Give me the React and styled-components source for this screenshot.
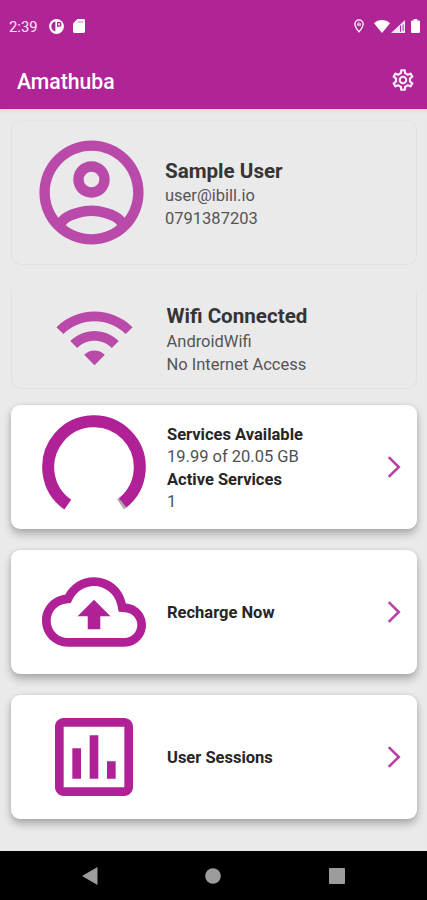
import React from "react";
import styled, { createGlobalStyle } from "styled-components";

const App = () => {
    return (
        <>
            <GlobalStyle />
            <Screen>
                <StatusBar>
                    <Clock>2:39</Clock>
                    <svg width="15" height="15" viewBox="0 0 15 15">
                        <circle cx="7.5" cy="7.5" r="7.4" fill="#fff" />
                        <path d="M6.4 2.6A5 5 0 0 0 6.4 12.4Z" fill="#b02596" />
                        <path d="M8 3h2.8a1.6 1.6 0 0 1 1.6 1.7v1.6a1.6 1.6 0 0 1-1.6 1.5H8z" fill="#b02596" />
                        <path d="M9.2 4.2h1.6v2.2H9.2z" fill="#fff" />
                    </svg>
                    <SdCard width="12" height="14" viewBox="0 0 12 14">
                        <path d="M4.4 0H10.6A1.4 1.4 0 0 1 12 1.4V12.6A1.4 1.4 0 0 1 10.6 14H1.4A1.4 1.4 0 0 1 0 12.6V4.4Z" fill="#fff" />
                        <path d="M5 2.4h5.2v1.2H5z" fill="#d88bcb" />
                    </SdCard>
                    <StatusRight>
                        <svg width="10" height="14" viewBox="0 0 10 14">
                            <path d="M5 .9A4.1 4.1 0 0 0 .9 5C.9 8 5 12.8 5 12.8S9.1 8 9.1 5A4.1 4.1 0 0 0 5 .9Z" fill="none" stroke="#fff" strokeWidth="1.3" />
                            <path d="M5 2.9v3.2M3.6 4.3v2h2.8v-2" fill="none" stroke="#fff" strokeWidth=".9" />
                        </svg>
                        <Wifi width="16" height="13" viewBox="0 0 16 13">
                            <path d="M8 13 0 3.2C4.5-1 11.5-1 16 3.2Z" fill="#fff" />
                        </Wifi>
                        <Signal width="14" height="13" viewBox="0 0 14 13">
                            <path d="M14 0V13H0Z" fill="#fbe6f7" />
                            <path d="M9 5.4h1v6.4H9zM11.6 4.5h1v6.5h-1z" fill="#b02596" />
                        </Signal>
                        <Battery width="9" height="14" viewBox="0 0 9 14">
                            <path d="M2.7 0h3.6v1.4h1.5Q9 1.4 9 2.6V12.8Q9 14 7.8 14H1.2Q0 14 0 12.8V2.6Q0 1.4 1.2 1.4h1.5Z" fill="#fff" />
                        </Battery>
                    </StatusRight>
                </StatusBar>
                <AppBar>
                    <AppTitle>Amathuba</AppTitle>
                    <svg width="26" height="26" viewBox="0 0 24 24" fill="#fdeafa">
                        <path d={icons.settings} />
                    </svg>
                </AppBar>

                <Content>
                    <FlatCard $height={145} $gap={25}>
                        <IconSlot $inset={6.5} $bottom={1} $faded>
                            <svg width="125" height="125" viewBox="0 0 24 24"><path d={icons.account} /></svg>
                        </IconSlot>
                        <FlatText $top={3}>
                            <Name>Sample User</Name>
                            <Detail>user@ibill.io</Detail>
                            <Detail>0791387203</Detail>
                        </FlatText>
                    </FlatCard>
                    <FlatCard $height={99} $gap={16} $open>
                        <IconSlot $inset={12.5} $bottom={5} $faded>
                            <svg width="83" height="83" viewBox="0 0 24 24"><path d={icons.wifi} /></svg>
                        </IconSlot>
                        <FlatText $left={1.5}>
                            <Name $bottom={1}>Wifi Connected</Name>
                            <Detail>AndroidWifi</Detail>
                            <Detail>No Internet Access</Detail>
                        </FlatText>
                    </FlatCard>

                    <Card>
                        <IconSlot>
                            <svg width="104" height="104" viewBox="0 0 104 104" fill="none" strokeWidth="12">
                                <path d="M78.5 89.3 81.6 87.2" stroke="#aaa" />
                                <path d="M25.8 89.7A45.8 45.8 0 1 1 80.7 87.8" />
                            </svg>
                        </IconSlot>
                        <CardText>
                            <Label>Services Available</Label>
                            <Value>19.99 of 20.05 GB</Value>
                            <Label>Active Services</Label>
                            <Value>1</Value>
                        </CardText>
                        <Chevron />
                    </Card>
                    <Card>
                        <IconSlot>
                            <svg width="104" height="104" viewBox="0 0 24 24"><path d={icons.cloud} /></svg>
                        </IconSlot>
                        <CardText>
                            <Label>Recharge Now</Label>
                        </CardText>
                        <Chevron />
                    </Card>
                    <Card>
                        <IconSlot>
                            <svg width="104" height="104" viewBox="0 0 24 24"><path d={icons.chart} /></svg>
                        </IconSlot>
                        <CardText>
                            <Label>User Sessions</Label>
                        </CardText>
                        <Chevron />
                    </Card>
                </Content>

                <NavBar>
                    <svg width="16" height="18" viewBox="0 0 16 18"><path d="M0 9 15.5 0V18Z" /></svg>
                    <svg width="16" height="16" viewBox="0 0 16 16"><circle cx="8" cy="8" r="7.8" /></svg>
                    <svg width="16" height="16" viewBox="0 0 16 16"><rect width="16" height="16" rx="1" /></svg>
                </NavBar>
            </Screen>
        </>
    );
};

const Chevron = () => (
    <ChevronIcon width="15" height="22" viewBox="0 0 15 22">
        <path d="M1.7 1.2 11.8 11 1.7 20.8" fill="none" stroke="#b83ea6" strokeWidth="2.5" />
    </ChevronIcon>
);

const icons = {
    settings: "M19.43 12.98c.04-.32.07-.64.07-.98 0-.34-.03-.66-.07-.98l2.11-1.65c.19-.15.24-.42.12-.64l-2-3.46c-.09-.16-.26-.25-.44-.25-.06 0-.12.01-.17.03l-2.49 1c-.52-.4-1.08-.73-1.69-.98l-.38-2.65C14.46 2.18 14.25 2 14 2h-4c-.25 0-.46.18-.49.42l-.38 2.65c-.61.25-1.17.59-1.69.98l-2.49-1c-.06-.02-.12-.03-.18-.03-.17 0-.34.09-.43.25l-2 3.46c-.13.22-.07.49.12.64l2.11 1.65c-.04.32-.07.65-.07.98 0 .33.03.66.07.98l-2.11 1.65c-.19.15-.24.42-.12.64l2 3.46c.09.16.26.25.44.25.06 0 .12-.01.17-.03l2.49-1c.52.4 1.08.73 1.69.98l.38 2.65c.03.24.24.42.49.42h4c.25 0 .46-.18.49-.42l.38-2.65c.61-.25 1.17-.59 1.69-.98l2.49 1c.06.02.12.03.18.03.17 0 .34-.09.43-.25l2-3.46c.12-.22.07-.49-.12-.64l-2.11-1.65zm-1.98-1.71c.04.31.05.52.05.73 0 .21-.02.43-.05.73l-.14 1.13.89.7 1.08.84-.7 1.21-1.27-.51-1.04-.42-.9.68c-.43.32-.84.56-1.25.73l-1.06.43-.16 1.13-.2 1.35h-1.4l-.19-1.35-.16-1.13-1.06-.43c-.43-.18-.83-.41-1.23-.71l-.91-.7-1.06.43-1.27.51-.7-1.21 1.08-.84.89-.7-.14-1.13c-.03-.31-.05-.54-.05-.74s.02-.43.05-.73l.14-1.13-.89-.7-1.08-.84.7-1.21 1.27.51 1.04.42.9-.68c.43-.32.84-.56 1.25-.73l1.06-.43.16-1.13.2-1.35h1.39l.19 1.35.16 1.13 1.06.43c.43.18.83.41 1.23.71l.91.7 1.06-.43 1.27-.51.7 1.21-1.07.85-.89.7.14 1.13zM12 8c-2.21 0-4 1.79-4 4s1.79 4 4 4 4-1.79 4-4-1.79-4-4-4zm0 6c-1.1 0-2-.9-2-2s.9-2 2-2 2 .9 2 2-.9 2-2 2z",
    account: "M12,2A10,10 0 0,0 2,12A10,10 0 0,0 12,22A10,10 0 0,0 22,12A10,10 0 0,0 12,2M7.07,18.28C7.5,17.38 10.12,16.5 12,16.5C13.88,16.5 16.5,17.38 16.93,18.28C15.57,19.36 13.86,20 12,20C10.14,20 8.43,19.36 7.07,18.28M18.36,16.83C16.93,15.09 13.46,14.5 12,14.5C10.54,14.5 7.07,15.09 5.64,16.83C4.62,15.5 4,13.82 4,12C4,7.59 7.59,4 12,4C16.41,4 20,7.59 20,12C20,13.82 19.38,15.5 18.36,16.83M12,6C10.06,6 8.5,7.56 8.5,9.5C8.5,11.44 10.06,13 12,13C13.94,13 15.5,11.44 15.5,9.5C15.5,7.56 13.94,6 12,6M12,11A1.5,1.5 0 0,1 10.5,9.5A1.5,1.5 0 0,1 12,8A1.5,1.5 0 0,1 13.5,9.5A1.5,1.5 0 0,1 12,11Z",
    wifi: "M1 9l2 2c4.97-4.97 13.03-4.97 18 0l2-2C16.93 2.93 7.08 2.93 1 9zm8 8l3 3 3-3c-1.65-1.66-4.34-1.66-6 0zm-4-4l2 2c2.76-2.76 7.24-2.76 10 0l2-2C15.14 9.14 8.87 9.14 5 13z",
    cloud: "M19.35 10.04C18.67 6.59 15.64 4 12 4 9.11 4 6.6 5.64 5.35 8.04 2.34 8.36 0 10.91 0 14c0 3.31 2.69 6 6 6h13c2.76 0 5-2.24 5-5 0-2.64-2.05-4.78-4.65-4.96zM19 18H6c-2.21 0-4-1.79-4-4 0-2.05 1.53-3.76 3.56-3.97l1.07-.11.5-.95C8.08 7.14 9.94 6 12 6c2.62 0 4.88 1.86 5.39 4.43l.3 1.5 1.53.11c1.56.1 2.78 1.41 2.78 2.96 0 1.65-1.35 3-3 3zM8.2 13h2.35v3h2.9v-3h2.35l-3.8-3.8z",
    chart: "M19 3H5c-1.1 0-2 .9-2 2v14c0 1.1.9 2 2 2h14c1.1 0 2-.9 2-2V5c0-1.1-.9-2-2-2zm0 16H5V5h14v14zM7 10h2v7H7zm4-3h2v10h-2zm4 6h2v4h-2z",
};

const GlobalStyle = createGlobalStyle`
  body {
    margin: 0;
    background: #eaeaea;
    font-family: Roboto, sans-serif;
  }
  * {
    box-sizing: border-box;
  }
  svg {
    display: block;
    flex-shrink: 0;
  }
`;

const Screen = styled.div`
  width: 427px;
  height: 900px;
  display: flex;
  flex-direction: column;
  overflow: hidden;
  background: #eaeaea;
`;

const StatusBar = styled.div`
  height: 52px;
  display: flex;
  align-items: center;
  padding: 0 7px 0 9px;
  background: #b02596;
`;

const Clock = styled.span`
  width: 39.5px;
  padding-top: 1px;
  font-size: 14.8px;
  color: #fbe3f7;
`;

const SdCard = styled.svg`
  margin-left: 9.5px;
`;

const StatusRight = styled.div`
  display: flex;
  align-items: center;
  margin-left: auto;
`;

const Wifi = styled.svg`
  margin-left: 10px;
`;

const Signal = styled.svg`
  margin-left: 1px;
`;

const Battery = styled.svg`
  margin-left: 6px;
`;

const AppBar = styled.div`
  height: 57px;
  display: flex;
  align-items: center;
  justify-content: space-between;
  padding: 0 11.5px 1px 17px;
  background: #b02596;
`;

const AppTitle = styled.h1`
  margin: 0;
  padding-top: 2px;
  font-size: 21.2px;
  font-weight: 500;
  color: #fff;
`;

const Content = styled.main`
  flex: 1;
  padding: 11px 10px 0 11px;
  box-shadow: inset 0 4px 4px -3px #d4d4d4;
`;

const FlatCard = styled.section`
  height: ${(props) => props.$height}px;
  margin-bottom: ${(props) => props.$gap}px;
  display: flex;
  align-items: center;
  border: 1px solid #e1e1e1;
  border-top-color: ${(props) => (props.$open ? "transparent" : "#e6e6e6")};
  border-radius: ${(props) => (props.$open ? "0 0 10px 10px" : "10px")};
`;

const Card = styled.section`
  height: 124.4px;
  margin-bottom: 20.6px;
  display: flex;
  align-items: center;
  border-radius: 9px;
  background: #fff;
  box-shadow: 0 5px 8px rgba(0, 0, 0, 0.27), 0 0 4px rgba(0, 0, 0, 0.08);
`;

const IconSlot = styled.div`
  width: ${(props) => (props.$faded ? 153 : 155)}px;
  flex-shrink: 0;
  display: flex;
  justify-content: center;
  padding-left: ${(props) => props.$inset ?? 11}px;
  padding-bottom: ${(props) => props.$bottom || 0}px;
  svg {
    fill: ${(props) => (props.$faded ? "#b94aa9" : "#b02096")};
  }
  svg[fill="none"] {
    fill: none;
    stroke: #b02096;
  }
`;

const FlatText = styled.div`
  padding-top: ${(props) => props.$top || 0}px;
  padding-left: ${(props) => props.$left || 0}px;
`;

const Name = styled.h2`
  margin: 0 0 ${(props) => props.$bottom || 0}px;
  font-size: 20.6px;
  line-height: 27px;
  font-weight: 700;
  color: #353535;
`;

const Detail = styled.p`
  margin: 0;
  font-size: 16.5px;
  line-height: 22.5px;
  color: #555;
`;

const CardText = styled.div`
  flex: 1;
  padding: 3px 0 0 1px;
`;

const Label = styled.p`
  margin: 0;
  font-size: 16.5px;
  line-height: 22.5px;
  font-weight: 700;
  color: #262626;
`;

const Value = styled.p`
  margin: 0;
  font-size: 16.5px;
  line-height: 22.5px;
  color: #505050;
`;

const ChevronIcon = styled.svg`
  margin-right: 15px;
`;

const NavBar = styled.nav`
  height: 49px;
  display: flex;
  align-items: center;
  justify-content: space-between;
  padding: 0 82px 0 81.5px;
  background: #000;
  fill: #9c9c9c;
`;

export default App;
